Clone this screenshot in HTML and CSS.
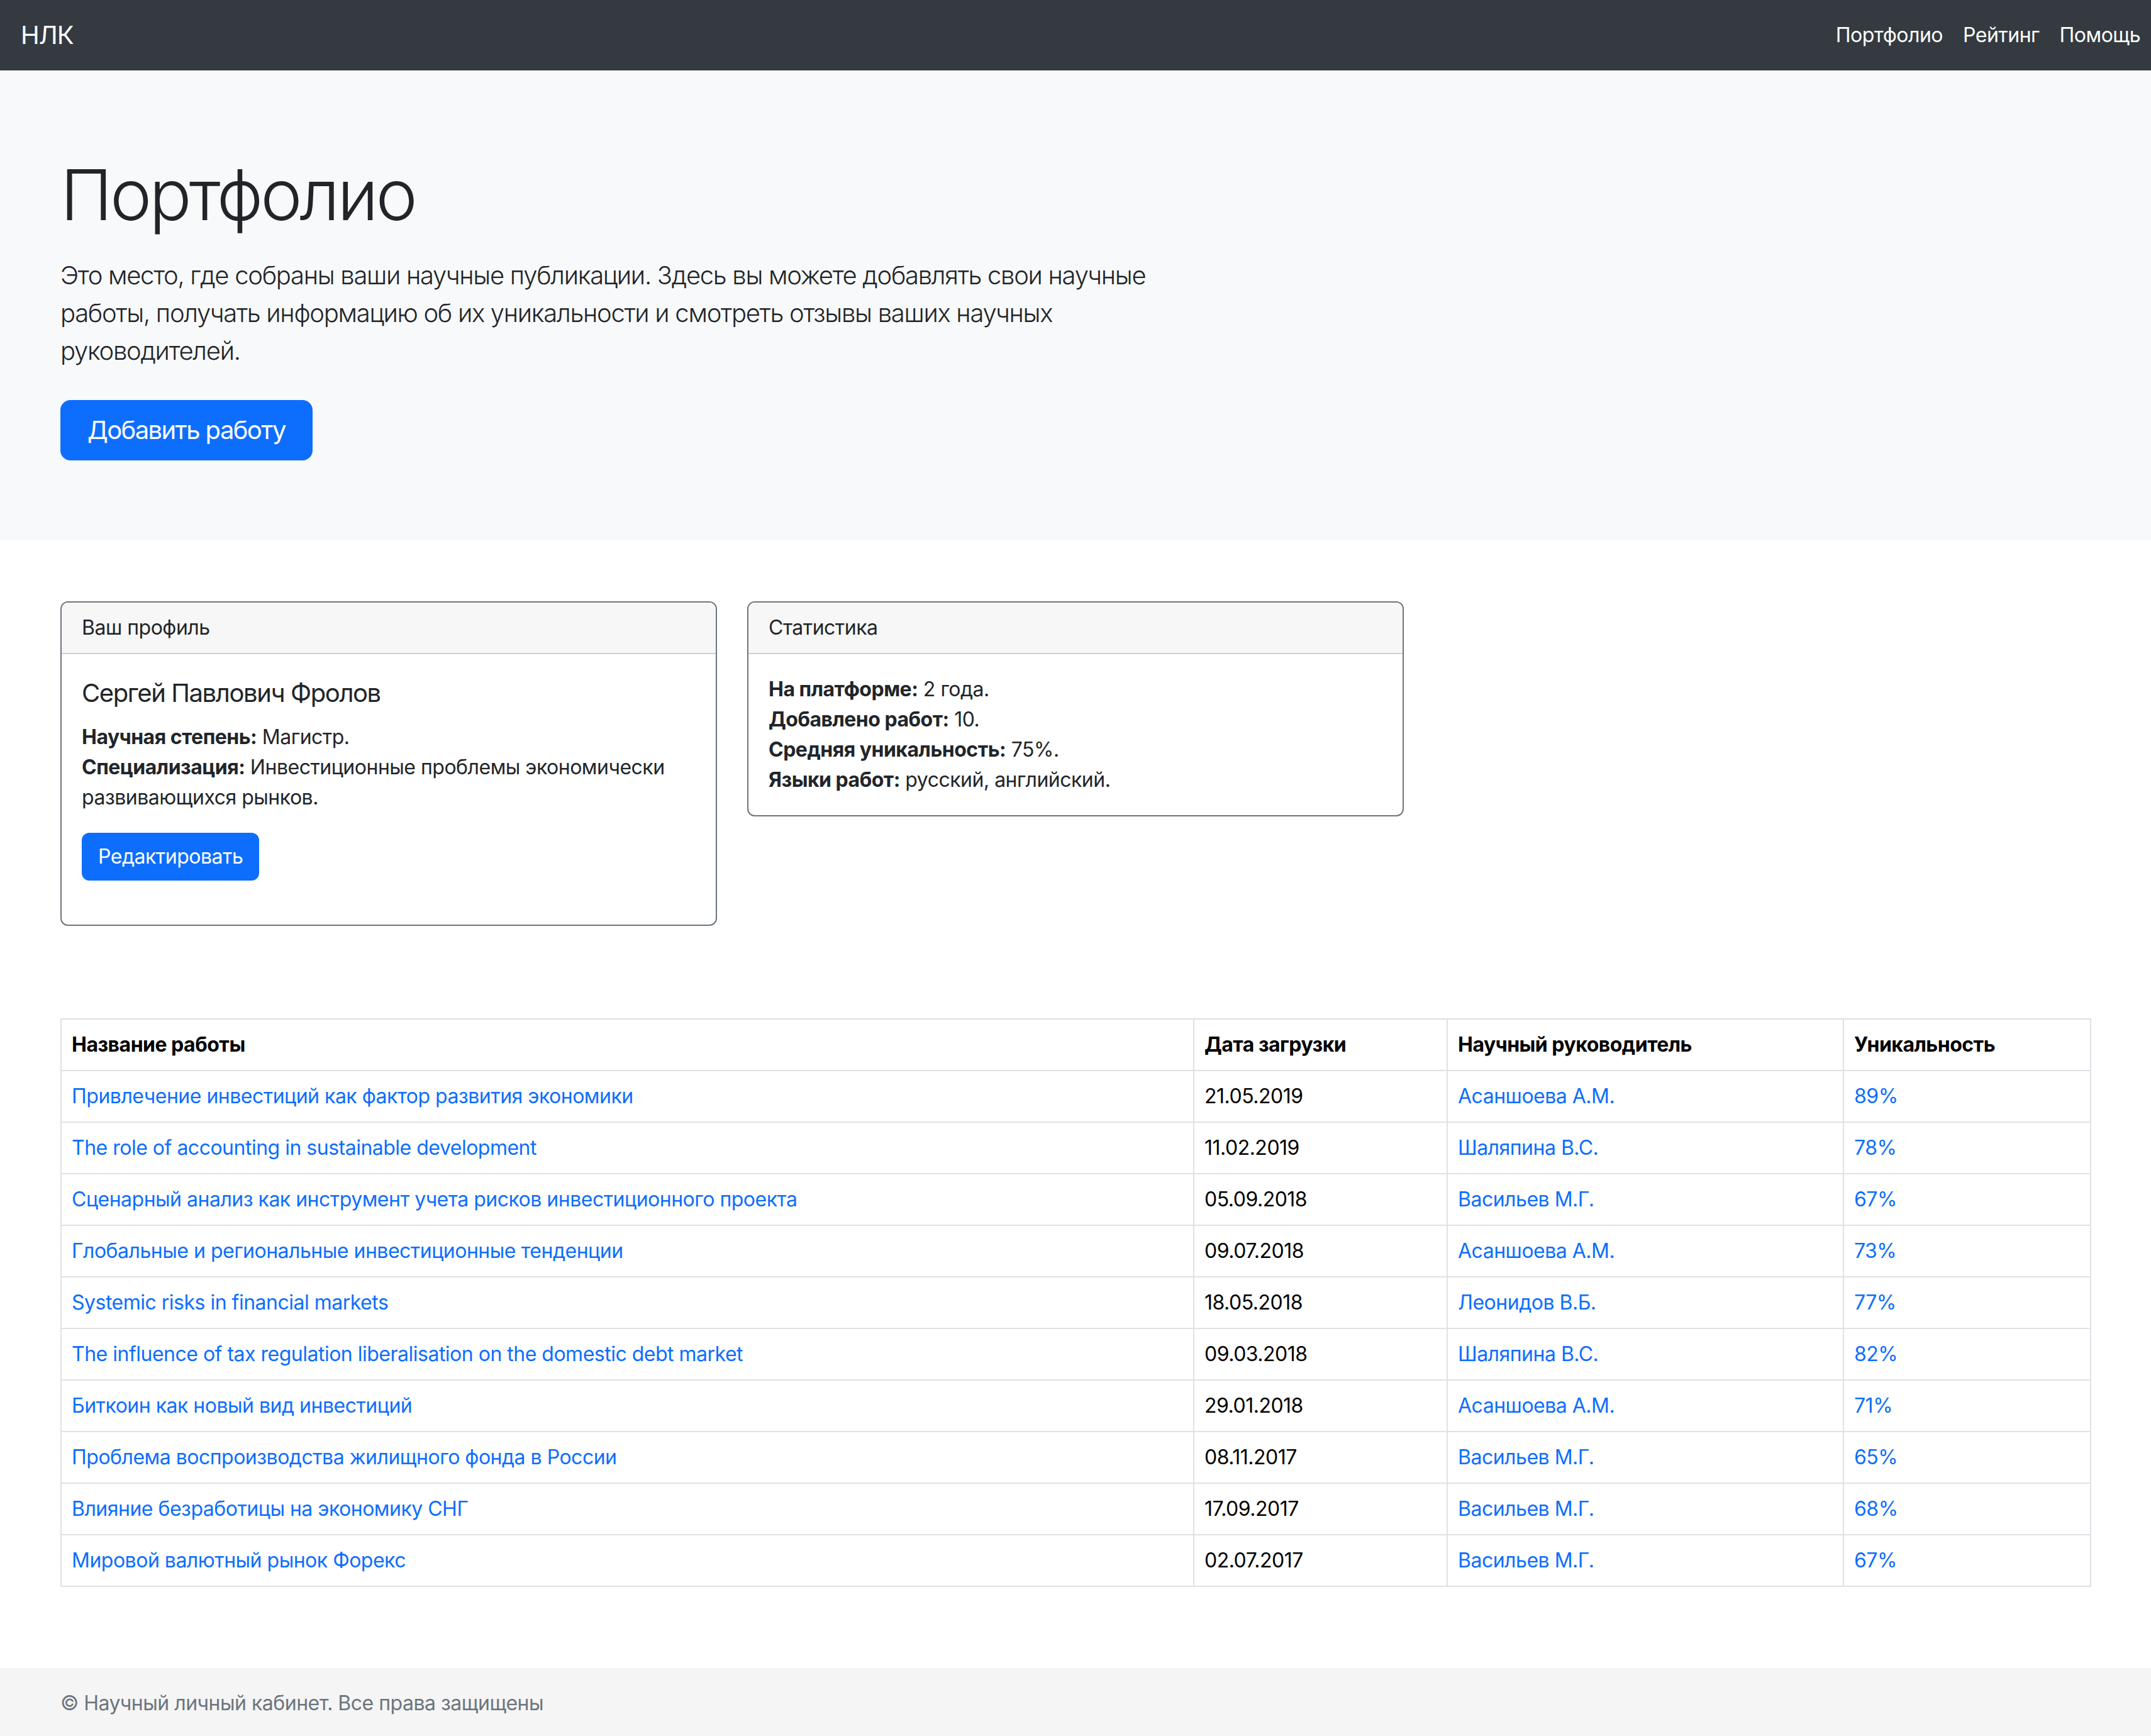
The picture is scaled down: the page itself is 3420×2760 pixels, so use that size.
FILE: index.html
```html
<!DOCTYPE html>
<html lang="ru">
<head>
<meta charset="utf-8">
<title>Портфолио — НЛК</title>
<link rel="stylesheet" href="styles.css">
</head>
<body>
<nav class="navbar">
  <a class="brand" href="#">НЛК</a>
  <ul class="nav-links">
    <li><a href="#">Портфолио</a></li>
    <li><a href="#">Рейтинг</a></li>
    <li><a href="#">Помощь</a></li>
  </ul>
</nav>

<section class="hero">
  <div class="container">
    <h1 class="display">Портфолио</h1>
    <p class="lead">Это место, где собраны ваши научные публикации. Здесь вы можете добавлять свои научные работы, получать информацию об их уникальности и смотреть отзывы ваших научных руководителей.</p>
    <a class="btn btn-lg" href="#">Добавить работу</a>
  </div>
</section>

<main class="container">
  <div class="cards">
    <div class="card">
      <div class="card-header">Ваш профиль</div>
      <div class="card-body">
        <h5 class="card-title">Сергей Павлович Фролов</h5>
        <p class="card-text"><b>Научная степень:</b> Магистр.<br><b>Специализация:</b> Инвестиционные проблемы экономически развивающихся рынков.</p>
        <a class="btn btn-edit" href="#">Редактировать</a>
      </div>
    </div>
    <div class="card">
      <div class="card-header">Статистика</div>
      <div class="card-body">
        <p class="card-text last"><b>На платформе:</b> 2 года.<br><b>Добавлено работ:</b> 10.<br><b>Средняя уникальность:</b> 75%.<br><b>Языки работ:</b> русский, английский.</p>
      </div>
    </div>
  </div>

  <table class="works">
    <colgroup>
      <col class="c-title">
      <col class="c-date">
      <col class="c-head">
      <col class="c-uniq">
    </colgroup>
    <thead>
      <tr><th>Название работы</th><th>Дата загрузки</th><th>Научный руководитель</th><th>Уникальность</th></tr>
    </thead>
    <tbody>
      <tr><td><a href="#">Привлечение инвестиций как фактор развития экономики</a></td><td>21.05.2019</td><td><a href="#">Асаншоева А.М.</a></td><td><a href="#">89%</a></td></tr>
      <tr><td><a href="#">The role of accounting in sustainable development</a></td><td>11.02.2019</td><td><a href="#">Шаляпина В.С.</a></td><td><a href="#">78%</a></td></tr>
      <tr><td><a href="#">Сценарный анализ как инструмент учета рисков инвестиционного проекта</a></td><td>05.09.2018</td><td><a href="#">Васильев М.Г.</a></td><td><a href="#">67%</a></td></tr>
      <tr><td><a href="#">Глобальные и региональные инвестиционные тенденции</a></td><td>09.07.2018</td><td><a href="#">Асаншоева А.М.</a></td><td><a href="#">73%</a></td></tr>
      <tr><td><a href="#">Systemic risks in financial markets</a></td><td>18.05.2018</td><td><a href="#">Леонидов В.Б.</a></td><td><a href="#">77%</a></td></tr>
      <tr><td><a href="#">The influence of tax regulation liberalisation on the domestic debt market</a></td><td>09.03.2018</td><td><a href="#">Шаляпина В.С.</a></td><td><a href="#">82%</a></td></tr>
      <tr><td><a href="#">Биткоин как новый вид инвестиций</a></td><td>29.01.2018</td><td><a href="#">Асаншоева А.М.</a></td><td><a href="#">71%</a></td></tr>
      <tr><td><a href="#">Проблема воспроизводства жилищного фонда в России</a></td><td>08.11.2017</td><td><a href="#">Васильев М.Г.</a></td><td><a href="#">65%</a></td></tr>
      <tr><td><a href="#">Влияние безработицы на экономику СНГ</a></td><td>17.09.2017</td><td><a href="#">Васильев М.Г.</a></td><td><a href="#">68%</a></td></tr>
      <tr><td><a href="#">Мировой валютный рынок Форекс</a></td><td>02.07.2017</td><td><a href="#">Васильев М.Г.</a></td><td><a href="#">67%</a></td></tr>
    </tbody>
  </table>
</main>

<footer class="footer">
  <div class="container">© Научный личный кабинет. Все права защищены</div>
</footer>
</body>
</html>
```

FILE: styles.css
```css
* { box-sizing: border-box; }

html, body {
  margin: 0;
  padding: 0;
}

body {
  font-family: Inter, "Noto Sans", "Liberation Sans", sans-serif;
  font-size: 32px;
  line-height: 48px;
  letter-spacing: -0.5px;
  color: #212529;
  background: #fff;
}

a { color: #0d6efd; text-decoration: none; }

.container {
  padding: 0 96px;
}

/* navbar */
.navbar {
  height: 112px;
  background: #343a40;
  display: flex;
  align-items: center;
  justify-content: space-between;
  padding: 0 17px 0 33px;
}
.brand {
  color: #fff;
  font-size: 40px;
  line-height: 60px;
  letter-spacing: -1px;
}
.nav-links {
  list-style: none;
  margin: 0;
  padding: 0;
  display: flex;
  gap: 32px;
}
.nav-links a {
  color: #fff;
  font-size: 32px;
  line-height: 48px;
}

/* hero */
.hero {
  background: #f8f9fa;
  padding: 130px 0 127px;
}
.display {
  margin: 0 0 32px;
  font-size: 112px;
  line-height: 1.2;
  font-weight: 300;
  letter-spacing: -4px;
}
.lead {
  margin: 0 0 48px;
  max-width: 1863px;
  font-size: 40px;
  line-height: 60px;
  font-weight: 300;
  letter-spacing: -1.3px;
}
.btn {
  display: inline-block;
  background: #0d6efd;
  color: #fff;
  border: 2px solid #0d6efd;
}
.btn-lg {
  font-size: 40px;
  line-height: 60px;
  padding: 16px 41px;
  border-radius: 16px;
  letter-spacing: -1.6px;
}
.btn-edit {
  font-size: 32px;
  line-height: 48px;
  padding: 12px 24px;
  border-radius: 12px;
  margin-bottom: 38px;
}

/* cards */
.cards {
  display: grid;
  grid-template-columns: repeat(3, 1fr);
  gap: 48px;
  align-items: start;
  margin-top: 97px;
}
.card {
  border: 2px solid #6c757d;
  border-radius: 12px;
  overflow: hidden;
  background: #fff;
}
.card-header {
  background: #f7f7f7;
  border-bottom: 2px solid #d0d0d0;
  padding: 16px 32px;
}
.card-body {
  padding: 32px;
}
.card-title {
  margin: 0 0 16px;
  font-size: 40px;
  line-height: 60px;
  font-weight: 400;
  letter-spacing: -1.4px;
}
.card-text {
  margin: 0 0 32px;
}
.card-text.last { margin-bottom: 0; }
.card-text b { font-weight: 700; }

/* table */
.works {
  width: 100%;
  table-layout: fixed;
  border-collapse: collapse;
  margin-top: 147px;
  margin-bottom: 129px;
}
.c-title { width: 1801px; }
.c-date { width: 403px; }
.c-head { width: 630px; }
.c-uniq { width: 393px; }
.works th,
.works td {
  border: 2px solid #dee2e6;
  padding: 16px 16px;
  text-align: left;
  vertical-align: top;
  white-space: nowrap;
  overflow: hidden;
}
.works th {
  font-weight: 700;
  color: #000;
}
.works td { color: #000; }

/* footer */
.footer {
  background: #f5f5f5;
  color: #6c757d;
  padding: 32px 0;
}
```
